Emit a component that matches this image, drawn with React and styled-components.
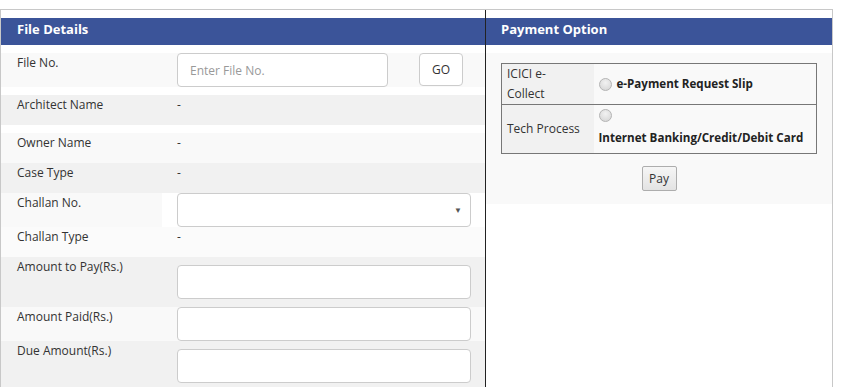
import React from "react";
import styled, { createGlobalStyle } from "styled-components";

const Global = createGlobalStyle`
  html, body { margin: 0; padding: 0; background: #fff; }
  body { font-family: "Open Sans", "Liberation Sans", sans-serif; font-size: 12px; color: #333; }
  * { box-sizing: border-box; }
`;

const Frame = styled.div`
  margin-top: 9px;
  width: 833px;
  border: 1px solid #c8c8c8;
  border-bottom: none;
  display: flex;
  align-items: stretch;
  min-height: 378px;
`;

const LeftCol = styled.div`
  width: 485px;
  border-right: 1px solid #222;
  padding-top: 8px;
`;

const RightCol = styled.div`
  flex: 1;
  padding-top: 8px;
`;

const Header = styled.div`
  height: 27px;
  background: #3b5499;
  color: #fff;
  font-weight: 700;
  font-size: 13px;
  line-height: 23px;
  padding-left: ${(p) => p.$pl}px;
  margin-bottom: 8px;
`;

const Row = styled.div`
  display: grid;
  grid-template-columns: 161px 1fr;
  min-height: ${(p) => p.$h}px;
  background: ${(p) => p.$bg || "transparent"};
  margin-bottom: ${(p) => p.$mb || 0}px;
`;

const Label = styled.div`
  padding-left: 16px;
  line-height: 20px;
  background: ${(p) => p.$bg || "transparent"};
`;

const Value = styled.div`
  padding-left: 15px;
  padding-right: 14px;
  padding-top: ${(p) => p.$pt || 0}px;
  line-height: 20px;
  display: flex;
  align-items: flex-start;
  gap: 31px;
`;

const TextInput = styled.input`
  height: 34px;
  width: ${(p) => p.$w || "100%"};
  border: 1px solid #ccc;
  border-radius: 4px;
  background: #fff;
  padding: 0 12px;
  font-family: "Open Sans", "Liberation Sans", sans-serif;
  font-size: 12px;
  color: #555;
  outline: none;
  &::placeholder { color: #999; }
`;

const GoButton = styled.button`
  height: 33px;
  width: 44px;
  border: 1px solid #ccc;
  border-radius: 4px;
  background: #fff;
  color: #333;
  font-family: "Open Sans", "Liberation Sans", sans-serif;
  font-size: 12px;
  padding: 0;
`;

const SelectWrap = styled.div`
  position: relative;
  width: 100%;
`;

const SelectBox = styled.div`
  height: 34px;
  width: 100%;
  border: 1px solid #ccc;
  border-radius: 4px;
  background: #fff;
`;

const Arrow = styled.span`
  position: absolute;
  right: 9px;
  top: 12px;
  font-size: 8px;
  line-height: 10px;
  color: #555;
`;

const Body = styled.div`
  background: #f9f9f9;
  padding: 10px 15px 13px;
  display: flex;
  flex-direction: column;
  align-items: center;
`;

const Table = styled.table`
  width: 100%;
  border-collapse: collapse;
  border: 1px solid #777;
  margin-bottom: 12px;
`;

const Tr = styled.tr`
  border-bottom: 1px solid #777;
  height: ${(p) => p.$h}px;
`;

const Th = styled.td`
  width: 92px;
  background: #f1f1f1;
  padding: 0 5px;
  line-height: 20px;
  vertical-align: middle;
  color: #333;
`;

const Td = styled.td`
  background: #f9f9f9;
  padding: 0 5px;
  vertical-align: middle;
  line-height: 20px;
`;

const OptionLine = styled.div`
  display: flex;
  align-items: center;
  gap: 5px;
  flex-wrap: wrap;
`;

const Radio = styled.input.attrs({ type: "radio" })`
  appearance: none;
  -webkit-appearance: none;
  margin: 0;
  width: 13px;
  height: 13px;
  border-radius: 50%;
  border: 1px solid #b5b5b5;
  background: radial-gradient(circle at 50% 35%, #f2f2f2 0%, #dcdcdc 70%, #cfcfcf 100%);
  flex: none;
`;

const OptionText = styled.span`
  font-weight: 700;
  font-size: 11.6px;
  color: #222;
  line-height: 22px;
  width: ${(p) => (p.$block ? "100%" : "auto")};
`;

const PayButton = styled.button`
  height: 25px;
  width: 35px;
  border: 1px solid #adadad;
  border-radius: 2px;
  background: linear-gradient(#f6f6f6, #e3e3e3);
  color: #333;
  font-family: "Open Sans", "Liberation Sans", sans-serif;
  font-size: 12px;
  padding: 0;
`;

export default function App() {
  return (
    <>
      <Global />
      <Frame>
        <LeftCol>
          <Header $pl={16}>File Details</Header>
          <Row $h={34} $bg="#f9f9f9" $mb={8}>
            <Label>File No.</Label>
            <Value>
              <TextInput $w="211px" placeholder="Enter File No." />
              <GoButton>GO</GoButton>
            </Value>
          </Row>
          <Row $h={30} $bg="#f1f1f1" $mb={8}>
            <Label>Architect Name</Label>
            <Value>-</Value>
          </Row>
          <Row $h={30} $bg="#f9f9f9">
            <Label>Owner Name</Label>
            <Value>-</Value>
          </Row>
          <Row $h={30} $bg="#f1f1f1">
            <Label>Case Type</Label>
            <Value>-</Value>
          </Row>
          <Row $h={34}>
            <Label $bg="#f9f9f9">Challan No.</Label>
            <Value>
              <SelectWrap>
                <SelectBox />
                <Arrow>▼</Arrow>
              </SelectWrap>
            </Value>
          </Row>
          <Row $h={30} $bg="#fbfbfb">
            <Label>Challan Type</Label>
            <Value>-</Value>
          </Row>
          <Row $h={50} $bg="#f1f1f1">
            <Label>Amount to Pay(Rs.)</Label>
            <Value $pt={8}>
              <TextInput />
            </Value>
          </Row>
          <Row $h={34} $bg="#f9f9f9">
            <Label>Amount Paid(Rs.)</Label>
            <Value>
              <TextInput />
            </Value>
          </Row>
          <Row $h={46} $bg="#f1f1f1">
            <Label>Due Amount(Rs.)</Label>
            <Value $pt={8}>
              <TextInput />
            </Value>
          </Row>
        </LeftCol>
        <RightCol>
          <Header $pl={15}>Payment Option</Header>
          <Body>
            <Table>
              <tbody>
                <Tr $h={41}>
                  <Th>ICICI e-<br />Collect</Th>
                  <Td>
                    <OptionLine>
                      <Radio name="pay" />
                      <OptionText>e-Payment Request Slip</OptionText>
                    </OptionLine>
                  </Td>
                </Tr>
                <Tr $h={49}>
                  <Th>Tech Process</Th>
                  <Td>
                    <OptionLine>
                      <Radio name="pay" />
                      <OptionText $block>Internet Banking/Credit/Debit Card</OptionText>
                    </OptionLine>
                  </Td>
                </Tr>
              </tbody>
            </Table>
            <PayButton>Pay</PayButton>
          </Body>
        </RightCol>
      </Frame>
    </>
  );
}
